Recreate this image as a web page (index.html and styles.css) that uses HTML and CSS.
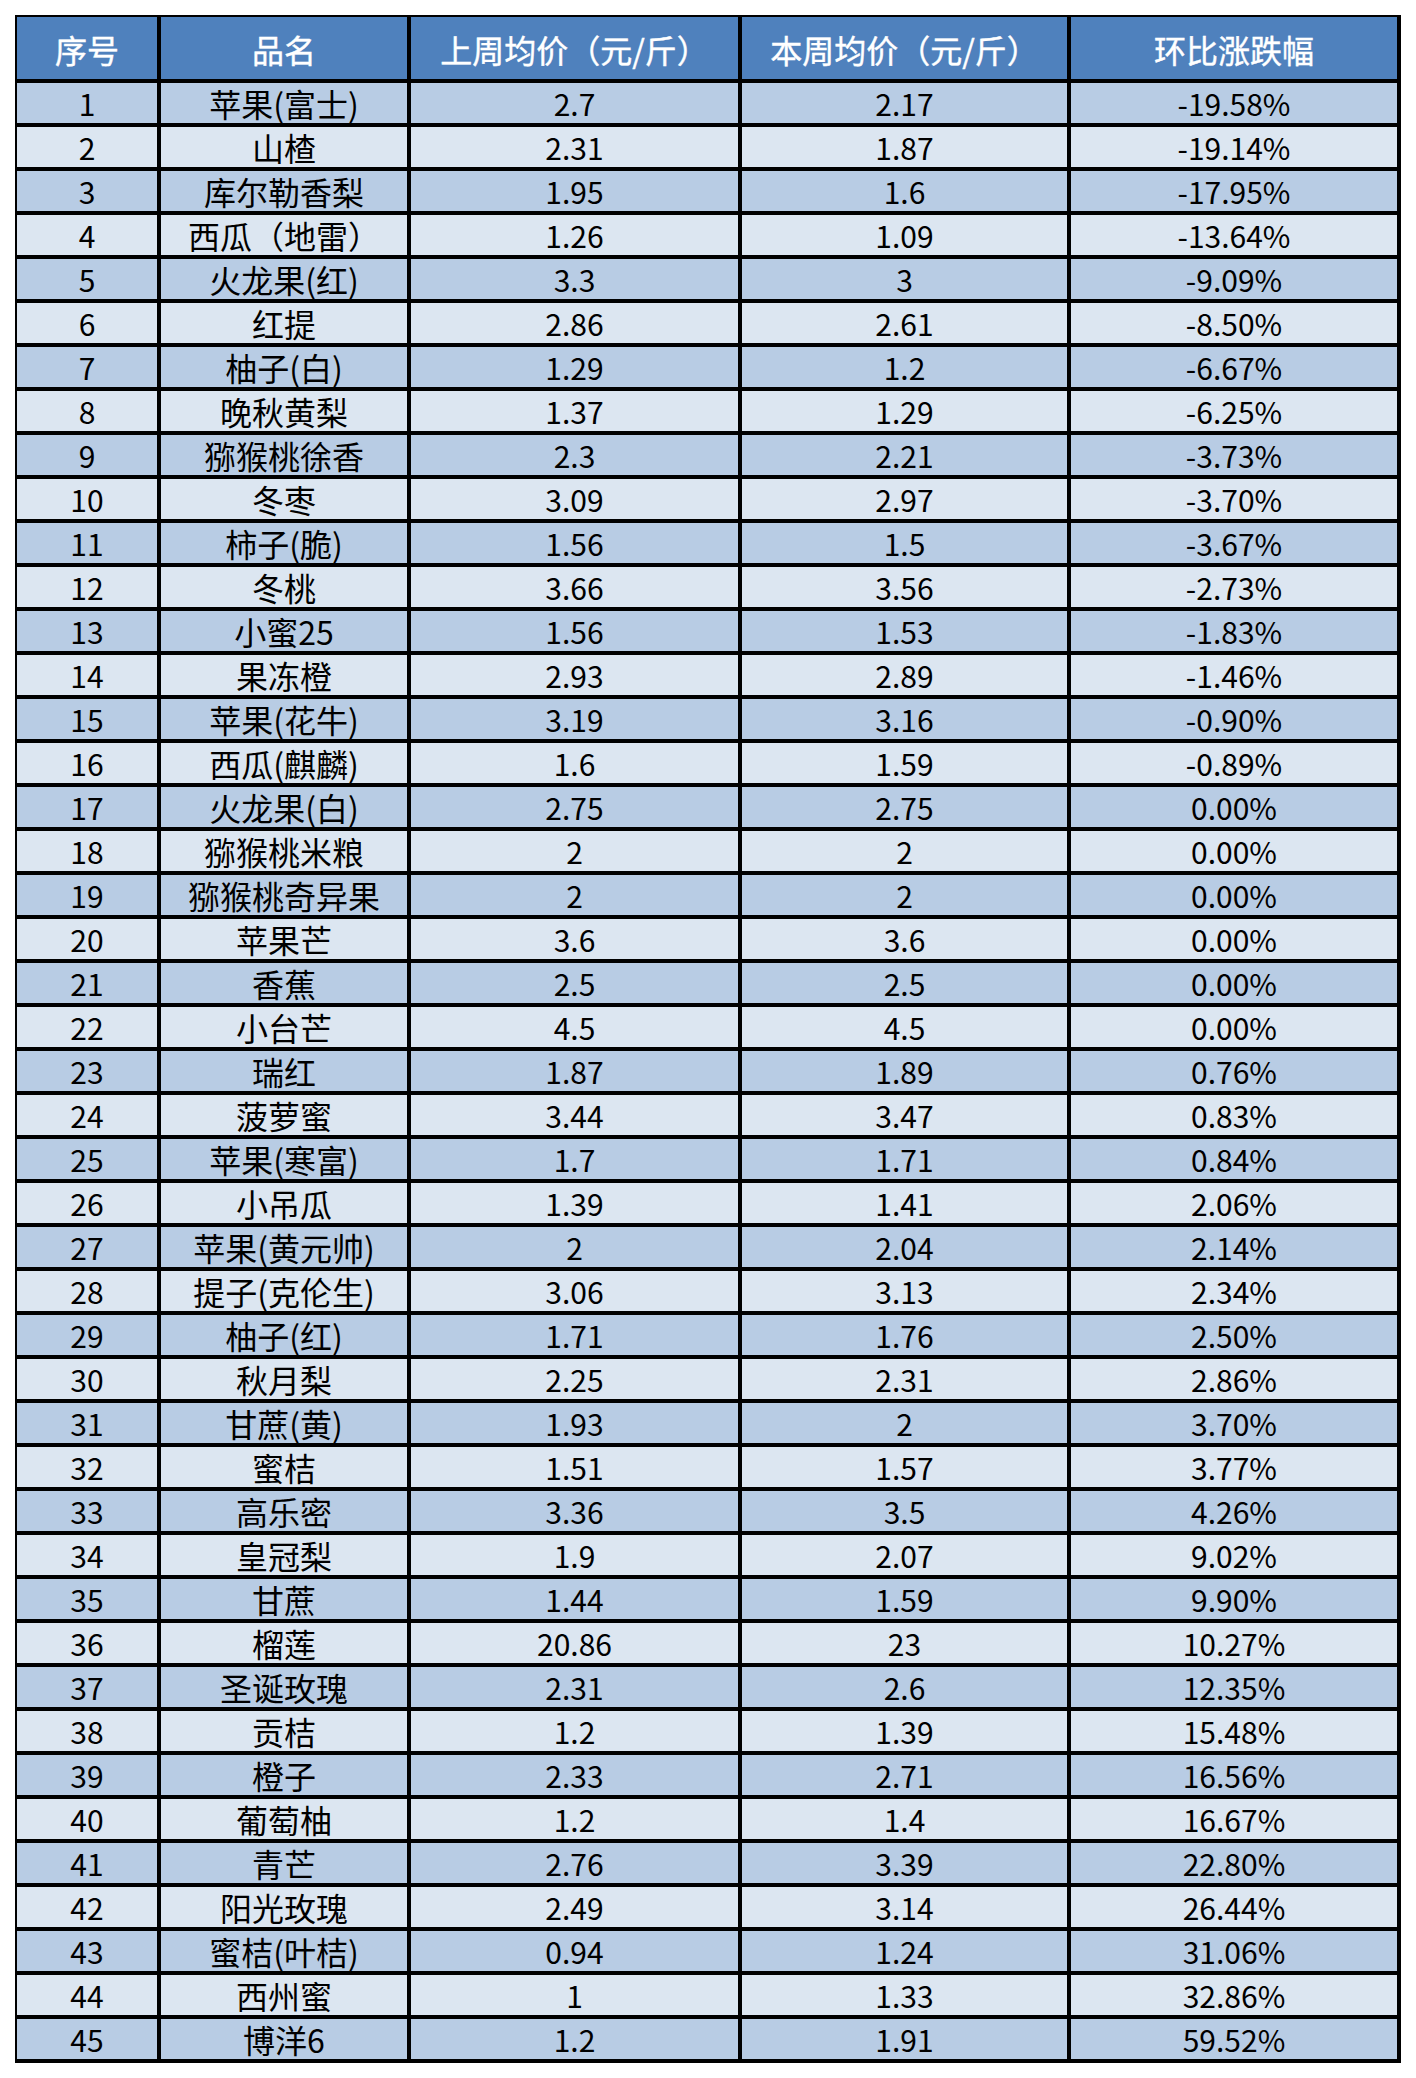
FILE: index.html
```html
<!DOCTYPE html>
<html lang="zh-CN">
<head>
<meta charset="utf-8">
<title>水果价格周报</title>
<link rel="stylesheet" href="styles.css">
</head>
<body>
<div class="sheet">
  <div class="row head"><div class="c">序号</div><div class="c">品名</div><div class="c">上周均价（元/斤）</div><div class="c">本周均价（元/斤）</div><div class="c">环比涨跌幅</div></div>
  <div class="row odd"><div class="c">1</div><div class="c">苹果(富士)</div><div class="c">2.7</div><div class="c">2.17</div><div class="c">-19.58%</div></div>
  <div class="row even"><div class="c">2</div><div class="c">山楂</div><div class="c">2.31</div><div class="c">1.87</div><div class="c">-19.14%</div></div>
  <div class="row odd"><div class="c">3</div><div class="c">库尔勒香梨</div><div class="c">1.95</div><div class="c">1.6</div><div class="c">-17.95%</div></div>
  <div class="row even"><div class="c">4</div><div class="c">西瓜（地雷）</div><div class="c">1.26</div><div class="c">1.09</div><div class="c">-13.64%</div></div>
  <div class="row odd"><div class="c">5</div><div class="c">火龙果(红)</div><div class="c">3.3</div><div class="c">3</div><div class="c">-9.09%</div></div>
  <div class="row even"><div class="c">6</div><div class="c">红提</div><div class="c">2.86</div><div class="c">2.61</div><div class="c">-8.50%</div></div>
  <div class="row odd"><div class="c">7</div><div class="c">柚子(白)</div><div class="c">1.29</div><div class="c">1.2</div><div class="c">-6.67%</div></div>
  <div class="row even"><div class="c">8</div><div class="c">晚秋黄梨</div><div class="c">1.37</div><div class="c">1.29</div><div class="c">-6.25%</div></div>
  <div class="row odd"><div class="c">9</div><div class="c">猕猴桃徐香</div><div class="c">2.3</div><div class="c">2.21</div><div class="c">-3.73%</div></div>
  <div class="row even"><div class="c">10</div><div class="c">冬枣</div><div class="c">3.09</div><div class="c">2.97</div><div class="c">-3.70%</div></div>
  <div class="row odd"><div class="c">11</div><div class="c">柿子(脆)</div><div class="c">1.56</div><div class="c">1.5</div><div class="c">-3.67%</div></div>
  <div class="row even"><div class="c">12</div><div class="c">冬桃</div><div class="c">3.66</div><div class="c">3.56</div><div class="c">-2.73%</div></div>
  <div class="row odd"><div class="c">13</div><div class="c">小蜜25</div><div class="c">1.56</div><div class="c">1.53</div><div class="c">-1.83%</div></div>
  <div class="row even"><div class="c">14</div><div class="c">果冻橙</div><div class="c">2.93</div><div class="c">2.89</div><div class="c">-1.46%</div></div>
  <div class="row odd"><div class="c">15</div><div class="c">苹果(花牛)</div><div class="c">3.19</div><div class="c">3.16</div><div class="c">-0.90%</div></div>
  <div class="row even"><div class="c">16</div><div class="c">西瓜(麒麟)</div><div class="c">1.6</div><div class="c">1.59</div><div class="c">-0.89%</div></div>
  <div class="row odd"><div class="c">17</div><div class="c">火龙果(白)</div><div class="c">2.75</div><div class="c">2.75</div><div class="c">0.00%</div></div>
  <div class="row even"><div class="c">18</div><div class="c">猕猴桃米粮</div><div class="c">2</div><div class="c">2</div><div class="c">0.00%</div></div>
  <div class="row odd"><div class="c">19</div><div class="c">猕猴桃奇异果</div><div class="c">2</div><div class="c">2</div><div class="c">0.00%</div></div>
  <div class="row even"><div class="c">20</div><div class="c">苹果芒</div><div class="c">3.6</div><div class="c">3.6</div><div class="c">0.00%</div></div>
  <div class="row odd"><div class="c">21</div><div class="c">香蕉</div><div class="c">2.5</div><div class="c">2.5</div><div class="c">0.00%</div></div>
  <div class="row even"><div class="c">22</div><div class="c">小台芒</div><div class="c">4.5</div><div class="c">4.5</div><div class="c">0.00%</div></div>
  <div class="row odd"><div class="c">23</div><div class="c">瑞红</div><div class="c">1.87</div><div class="c">1.89</div><div class="c">0.76%</div></div>
  <div class="row even"><div class="c">24</div><div class="c">菠萝蜜</div><div class="c">3.44</div><div class="c">3.47</div><div class="c">0.83%</div></div>
  <div class="row odd"><div class="c">25</div><div class="c">苹果(寒富)</div><div class="c">1.7</div><div class="c">1.71</div><div class="c">0.84%</div></div>
  <div class="row even"><div class="c">26</div><div class="c">小吊瓜</div><div class="c">1.39</div><div class="c">1.41</div><div class="c">2.06%</div></div>
  <div class="row odd"><div class="c">27</div><div class="c">苹果(黄元帅)</div><div class="c">2</div><div class="c">2.04</div><div class="c">2.14%</div></div>
  <div class="row even"><div class="c">28</div><div class="c">提子(克伦生)</div><div class="c">3.06</div><div class="c">3.13</div><div class="c">2.34%</div></div>
  <div class="row odd"><div class="c">29</div><div class="c">柚子(红)</div><div class="c">1.71</div><div class="c">1.76</div><div class="c">2.50%</div></div>
  <div class="row even"><div class="c">30</div><div class="c">秋月梨</div><div class="c">2.25</div><div class="c">2.31</div><div class="c">2.86%</div></div>
  <div class="row odd"><div class="c">31</div><div class="c">甘蔗(黄)</div><div class="c">1.93</div><div class="c">2</div><div class="c">3.70%</div></div>
  <div class="row even"><div class="c">32</div><div class="c">蜜桔</div><div class="c">1.51</div><div class="c">1.57</div><div class="c">3.77%</div></div>
  <div class="row odd"><div class="c">33</div><div class="c">高乐密</div><div class="c">3.36</div><div class="c">3.5</div><div class="c">4.26%</div></div>
  <div class="row even"><div class="c">34</div><div class="c">皇冠梨</div><div class="c">1.9</div><div class="c">2.07</div><div class="c">9.02%</div></div>
  <div class="row odd"><div class="c">35</div><div class="c">甘蔗</div><div class="c">1.44</div><div class="c">1.59</div><div class="c">9.90%</div></div>
  <div class="row even"><div class="c">36</div><div class="c">榴莲</div><div class="c">20.86</div><div class="c">23</div><div class="c">10.27%</div></div>
  <div class="row odd"><div class="c">37</div><div class="c">圣诞玫瑰</div><div class="c">2.31</div><div class="c">2.6</div><div class="c">12.35%</div></div>
  <div class="row even"><div class="c">38</div><div class="c">贡桔</div><div class="c">1.2</div><div class="c">1.39</div><div class="c">15.48%</div></div>
  <div class="row odd"><div class="c">39</div><div class="c">橙子</div><div class="c">2.33</div><div class="c">2.71</div><div class="c">16.56%</div></div>
  <div class="row even"><div class="c">40</div><div class="c">葡萄柚</div><div class="c">1.2</div><div class="c">1.4</div><div class="c">16.67%</div></div>
  <div class="row odd"><div class="c">41</div><div class="c">青芒</div><div class="c">2.76</div><div class="c">3.39</div><div class="c">22.80%</div></div>
  <div class="row even"><div class="c">42</div><div class="c">阳光玫瑰</div><div class="c">2.49</div><div class="c">3.14</div><div class="c">26.44%</div></div>
  <div class="row odd"><div class="c">43</div><div class="c">蜜桔(叶桔)</div><div class="c">0.94</div><div class="c">1.24</div><div class="c">31.06%</div></div>
  <div class="row even"><div class="c">44</div><div class="c">西州蜜</div><div class="c">1</div><div class="c">1.33</div><div class="c">32.86%</div></div>
  <div class="row odd"><div class="c">45</div><div class="c">博洋6</div><div class="c">1.2</div><div class="c">1.91</div><div class="c">59.52%</div></div>
</div>
</body>
</html>
```

FILE: styles.css
```css
html, body {
  margin: 0;
  background: #ffffff;
}

body {
  padding: 15px;
  font-family: "Noto Sans CJK SC", "Noto Sans", sans-serif;
}

.sheet {
  display: grid;
  grid-template-columns: 140px 246px 327px 325px 326px;
  grid-template-rows: 62px;
  grid-auto-rows: 40px;
  gap: 4px;
  width: max-content;
  padding: 2px 4px 4px 2px;
  background: #000000;
}

.row {
  display: contents;
}

.c {
  display: flex;
  align-items: center;
  justify-content: center;
  font-size: 30px;
  line-height: 1;
  color: #000000;
  white-space: nowrap;
}

.c:nth-child(2) {
  font-size: 32px;
}

.head .c {
  background: #4f81bd;
  color: #ffffff;
  font-size: 32px;
  padding-top: 2px;
  -webkit-text-stroke: 0.4px #ffffff;
}

.odd .c {
  background: #b8cce4;
}

.even .c {
  background: #dce6f1;
}
```
